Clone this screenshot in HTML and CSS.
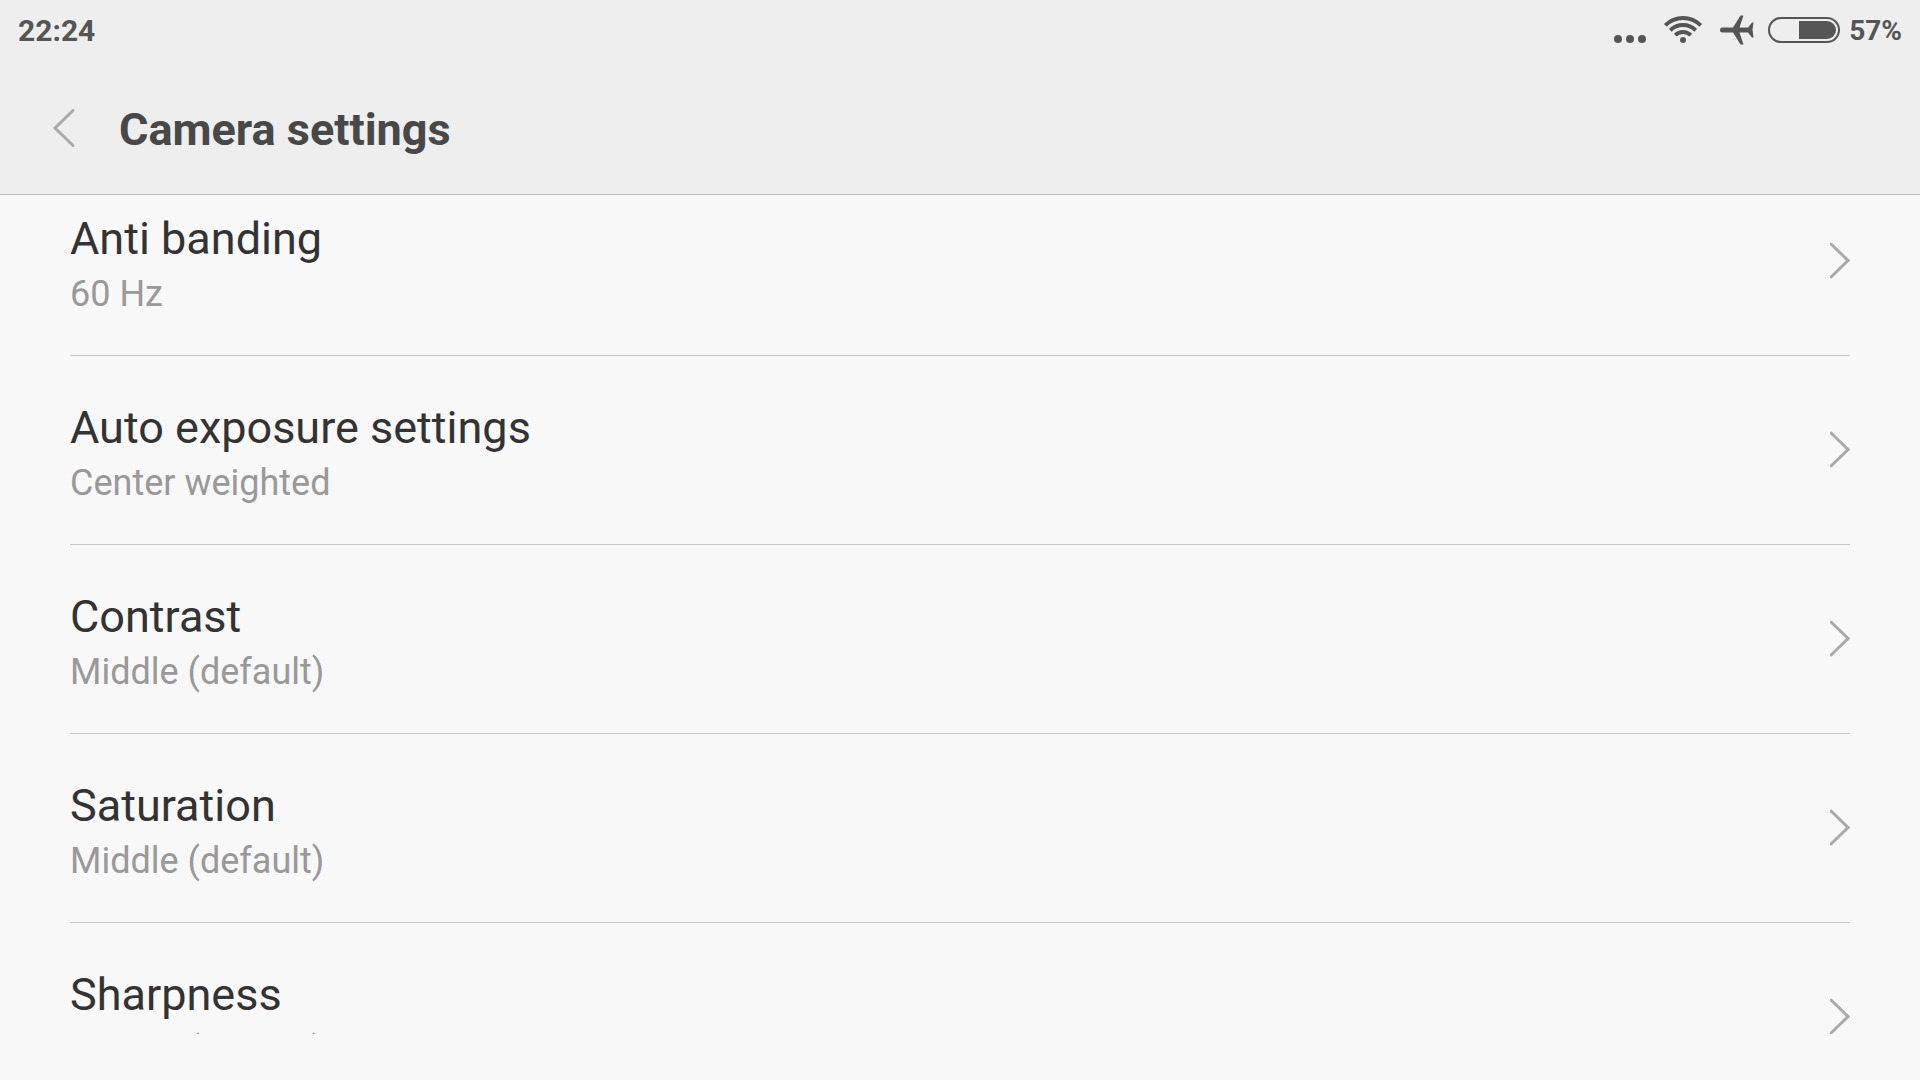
FILE: index.html
```html
<!DOCTYPE html>
<html lang="en">
<head>
  <meta charset="utf-8">
  <meta name="viewport" content="width=device-width, initial-scale=1">
  <title>Camera settings</title>
  <link rel="stylesheet" href="styles.css">
</head>
<body>
  <header class="header">
    <div class="status-bar">
      <time class="clock">22:24</time>
      <div class="status-icons">
        <svg class="icon-more" width="32" height="10" viewBox="0 0 32 10" aria-hidden="true">
          <circle cx="4" cy="5" r="4"/><circle cx="16" cy="5" r="4"/><circle cx="28" cy="5" r="4"/>
        </svg>
        <svg class="icon-wifi" width="40" height="30" viewBox="0 0 40 30" aria-hidden="true">
          <circle cx="20" cy="25" r="3" fill="currentColor"/>
          <g fill="none" stroke="currentColor" stroke-width="4">
            <path d="M12.2 20.2a11 11 0 0 1 15.6 0"/>
            <path d="M7.3 15.3a18 18 0 0 1 25.4 0"/>
            <path d="M2.3 10.3a25 25 0 0 1 35.4 0"/>
          </g>
        </svg>
        <svg class="icon-plane" width="34" height="30" viewBox="0 0 34 30" aria-hidden="true">
          <path d="M2.500 12.500H13L20.500 0.500H23.500L19.500 12.500H28L32 7.500H33.500L32.500 14.800L33.500 22.500H32L28 17.500H19.500L23.500 29.500H20.500L13 17.500H2.500A2.500 2.500 0 0 1 2.500 12.500Z"/>
        </svg>
        <svg class="icon-battery" width="72" height="26" viewBox="0 0 72 26" aria-hidden="true">
          <rect x="1" y="1" width="70" height="24" rx="12" fill="none" stroke="currentColor" stroke-width="2"/>
          <path d="M31 4H59a9 9 0 0 1 0 18H31Z"/>
        </svg>
        <span class="battery-level">57%</span>
      </div>
    </div>
    <div class="title-bar">
      <button class="back" type="button" aria-label="Back">
        <svg width="24" height="40" viewBox="0 0 24 40" aria-hidden="true"><path d="M21 2.500L3 20L21 37.500"/></svg>
      </button>
      <h1 class="title">Camera settings</h1>
    </div>
  </header>

  <main class="content">
    <ul class="settings">
      <li><a class="setting" href="#anti-banding">
        <span class="setting-text"><span class="setting-name">Anti banding</span><span class="setting-value">60 Hz</span></span>
        <svg class="chevron" width="20" height="38" viewBox="0 0 20 38" aria-hidden="true"><path d="M1 2L18 18.500L1 35"/></svg>
      </a></li>
      <li><a class="setting" href="#auto-exposure">
        <span class="setting-text"><span class="setting-name">Auto exposure settings</span><span class="setting-value">Center weighted</span></span>
        <svg class="chevron" width="20" height="38" viewBox="0 0 20 38" aria-hidden="true"><path d="M1 2L18 18.500L1 35"/></svg>
      </a></li>
      <li><a class="setting" href="#contrast">
        <span class="setting-text"><span class="setting-name">Contrast</span><span class="setting-value">Middle (default)</span></span>
        <svg class="chevron" width="20" height="38" viewBox="0 0 20 38" aria-hidden="true"><path d="M1 2L18 18.500L1 35"/></svg>
      </a></li>
      <li><a class="setting" href="#saturation">
        <span class="setting-text"><span class="setting-name">Saturation</span><span class="setting-value">Middle (default)</span></span>
        <svg class="chevron" width="20" height="38" viewBox="0 0 20 38" aria-hidden="true"><path d="M1 2L18 18.500L1 35"/></svg>
      </a></li>
      <li><a class="setting" href="#sharpness">
        <span class="setting-text"><span class="setting-name">Sharpness</span><span class="setting-value">Middle (default)</span></span>
        <svg class="chevron" width="20" height="38" viewBox="0 0 20 38" aria-hidden="true"><path d="M1 2L18 18.500L1 35"/></svg>
      </a></li>
    </ul>
  </main>
</body>
</html>
```
FILE: styles.css
```css
* {
  box-sizing: border-box;
}

body {
  display: flex;
  flex-direction: column;
  height: 100vh;
  margin: 0;
  padding-bottom: 46px;
  overflow: hidden;
  background: #f8f8f8;
  color: #333;
  font-family: Roboto, "Noto Sans", sans-serif;
}

svg {
  display: block;
  flex: none;
  fill: currentColor;
}

.header {
  flex: none;
  background: #eee;
  border-bottom: 1px solid #bbb;
}

.status-bar {
  display: flex;
  align-items: center;
  justify-content: space-between;
  height: 60px;
  padding: 0 18px;
  color: #555;
  font-weight: 700;
}

.clock,
.battery-level {
  padding-top: 2px;
  line-height: 40px;
}

.clock {
  font-size: 30px;
}

.battery-level {
  font-size: 28px;
}

.status-icons {
  display: flex;
  align-items: center;
}

.icon-more {
  margin: 18px 17px 0 0;
}

.icon-wifi {
  margin-right: 17px;
}

.icon-plane {
  margin-right: 14px;
}

.icon-battery {
  margin-right: 9px;
}

.title-bar {
  display: flex;
  align-items: center;
  gap: 43px;
  padding: 39px 52px 37px;
}

.back {
  padding: 0;
  border: 0;
  background: none;
  color: #aaa;
}

.back path,
.chevron path {
  fill: none;
  stroke: currentColor;
  stroke-width: 3;
  stroke-linecap: round;
}

.title {
  margin: 0;
  padding-top: 4px;
  color: #484848;
  font-size: 45px;
  line-height: 54px;
}

.content {
  flex: 1;
  min-height: 0;
  overflow: hidden;
}

.settings {
  margin: -28px 70px 0;
  padding: 0;
  list-style: none;
}

.setting {
  display: flex;
  align-items: center;
  justify-content: space-between;
  border-bottom: 1px solid #c8c8c8;
  color: inherit;
  text-decoration: none;
}

.setting-text {
  display: grid;
  gap: 7px;
  padding: 45px 0 40px;
}

.setting-name {
  font-size: 45px;
  line-height: 54px;
}

.setting-value {
  color: #999;
  font-size: 36px;
  line-height: 42px;
}

.chevron {
  color: #aaa;
}
```
